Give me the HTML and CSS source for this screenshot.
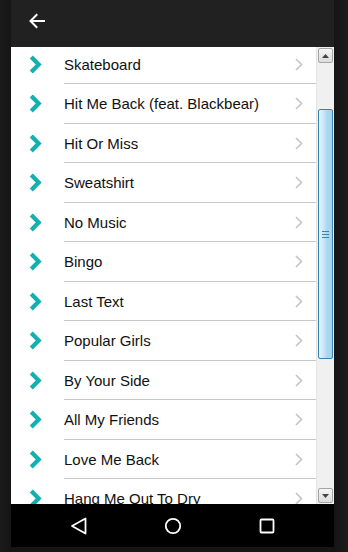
FILE: index.html
```html
<!DOCTYPE html>
<html>
<head>
<meta charset="utf-8">
<link rel="stylesheet" href="styles.css">
</head>
<body>
<div class="device">
  <div class="screen">
    <header class="topbar">
      <svg class="back" width="18" height="16" viewBox="0 0 18 16"><path d="M16 8H3M8.5 2L2.5 8l6 6" fill="none" stroke="#fff" stroke-width="2" stroke-linecap="square"/></svg>
    </header>
    <div class="content">
      <div class="list-wrap">
        <ul class="list">
          <li class="row"><svg class="lead" viewBox="0 0 14 18"><path d="M3 2l7 7-7 7" fill="none" stroke="#12b0b0" stroke-width="4"/></svg><span class="title">Skateboard</span><svg class="trail" viewBox="0 0 8 13"><path d="M1 1l5.5 5.5L1 12" fill="none" stroke="#c4c4c4" stroke-width="1.6"/></svg></li>
          <li class="row"><svg class="lead" viewBox="0 0 14 18"><path d="M3 2l7 7-7 7" fill="none" stroke="#12b0b0" stroke-width="4"/></svg><span class="title">Hit Me Back (feat. Blackbear)</span><svg class="trail" viewBox="0 0 8 13"><path d="M1 1l5.5 5.5L1 12" fill="none" stroke="#c4c4c4" stroke-width="1.6"/></svg></li>
          <li class="row"><svg class="lead" viewBox="0 0 14 18"><path d="M3 2l7 7-7 7" fill="none" stroke="#12b0b0" stroke-width="4"/></svg><span class="title">Hit Or Miss</span><svg class="trail" viewBox="0 0 8 13"><path d="M1 1l5.5 5.5L1 12" fill="none" stroke="#c4c4c4" stroke-width="1.6"/></svg></li>
          <li class="row"><svg class="lead" viewBox="0 0 14 18"><path d="M3 2l7 7-7 7" fill="none" stroke="#12b0b0" stroke-width="4"/></svg><span class="title">Sweatshirt</span><svg class="trail" viewBox="0 0 8 13"><path d="M1 1l5.5 5.5L1 12" fill="none" stroke="#c4c4c4" stroke-width="1.6"/></svg></li>
          <li class="row"><svg class="lead" viewBox="0 0 14 18"><path d="M3 2l7 7-7 7" fill="none" stroke="#12b0b0" stroke-width="4"/></svg><span class="title">No Music</span><svg class="trail" viewBox="0 0 8 13"><path d="M1 1l5.5 5.5L1 12" fill="none" stroke="#c4c4c4" stroke-width="1.6"/></svg></li>
          <li class="row"><svg class="lead" viewBox="0 0 14 18"><path d="M3 2l7 7-7 7" fill="none" stroke="#12b0b0" stroke-width="4"/></svg><span class="title">Bingo</span><svg class="trail" viewBox="0 0 8 13"><path d="M1 1l5.5 5.5L1 12" fill="none" stroke="#c4c4c4" stroke-width="1.6"/></svg></li>
          <li class="row"><svg class="lead" viewBox="0 0 14 18"><path d="M3 2l7 7-7 7" fill="none" stroke="#12b0b0" stroke-width="4"/></svg><span class="title">Last Text</span><svg class="trail" viewBox="0 0 8 13"><path d="M1 1l5.5 5.5L1 12" fill="none" stroke="#c4c4c4" stroke-width="1.6"/></svg></li>
          <li class="row"><svg class="lead" viewBox="0 0 14 18"><path d="M3 2l7 7-7 7" fill="none" stroke="#12b0b0" stroke-width="4"/></svg><span class="title">Popular Girls</span><svg class="trail" viewBox="0 0 8 13"><path d="M1 1l5.5 5.5L1 12" fill="none" stroke="#c4c4c4" stroke-width="1.6"/></svg></li>
          <li class="row"><svg class="lead" viewBox="0 0 14 18"><path d="M3 2l7 7-7 7" fill="none" stroke="#12b0b0" stroke-width="4"/></svg><span class="title">By Your Side</span><svg class="trail" viewBox="0 0 8 13"><path d="M1 1l5.5 5.5L1 12" fill="none" stroke="#c4c4c4" stroke-width="1.6"/></svg></li>
          <li class="row"><svg class="lead" viewBox="0 0 14 18"><path d="M3 2l7 7-7 7" fill="none" stroke="#12b0b0" stroke-width="4"/></svg><span class="title">All My Friends</span><svg class="trail" viewBox="0 0 8 13"><path d="M1 1l5.5 5.5L1 12" fill="none" stroke="#c4c4c4" stroke-width="1.6"/></svg></li>
          <li class="row"><svg class="lead" viewBox="0 0 14 18"><path d="M3 2l7 7-7 7" fill="none" stroke="#12b0b0" stroke-width="4"/></svg><span class="title">Love Me Back</span><svg class="trail" viewBox="0 0 8 13"><path d="M1 1l5.5 5.5L1 12" fill="none" stroke="#c4c4c4" stroke-width="1.6"/></svg></li>
          <li class="row"><svg class="lead" viewBox="0 0 14 18"><path d="M3 2l7 7-7 7" fill="none" stroke="#12b0b0" stroke-width="4"/></svg><span class="title">Hang Me Out To Dry</span><svg class="trail" viewBox="0 0 8 13"><path d="M1 1l5.5 5.5L1 12" fill="none" stroke="#c4c4c4" stroke-width="1.6"/></svg></li>
        </ul>
      </div>
      <div class="scrollbar">
        <div class="sb-btn"><svg width="7" height="4" viewBox="0 0 7 4"><path d="M0 4L3.5 0 7 4z" fill="#444"/></svg></div>
        <div class="sb-track">
          <div class="sb-thumb"><span class="grip"></span></div>
        </div>
        <div class="sb-btn"><svg width="7" height="4" viewBox="0 0 7 4"><path d="M0 0L3.5 4 7 0z" fill="#444"/></svg></div>
      </div>
    </div>
    <nav class="navbar">
      <svg width="18" height="18" viewBox="0 0 18 18"><path d="M15.5 1.5v15L2 9z" fill="none" stroke="#fff" stroke-width="1.8" stroke-linejoin="round"/></svg>
      <svg width="18" height="18" viewBox="0 0 18 18"><circle cx="9" cy="9" r="7.2" fill="none" stroke="#fff" stroke-width="1.8"/></svg>
      <svg width="18" height="18" viewBox="0 0 18 18"><rect x="2.5" y="2.5" width="13" height="13" rx="1" fill="none" stroke="#fff" stroke-width="1.8"/></svg>
    </nav>
  </div>
</div>
</body>
</html>
```

FILE: styles.css
```css
* { box-sizing: border-box; }
html, body { margin: 0; padding: 0; }
body {
  background: #171717;
  font-family: "Liberation Sans", Arial, sans-serif;
  width: 348px;
  height: 552px;
  overflow: hidden;
}
.device {
  height: 552px;
  padding: 0 14px 5px 11px;
  background: linear-gradient(90deg, #1b1b1b 0, #151515 11px, #151515 334px, #1c1c1c 348px);
}
.screen {
  height: 547px;
  display: flex;
  flex-direction: column;
}
.topbar {
  height: 47px;
  flex: none;
  background: #212121;
  display: flex;
  align-items: center;
  padding-left: 17px;
  padding-bottom: 5px;
}
.content {
  height: 457px;
  flex: none;
  display: flex;
  background: #fff;
}
.list-wrap {
  flex: 1;
  overflow: hidden;
}
.list {
  list-style: none;
  margin: -2.5px 0 0;
  padding: 0;
}
.row {
  height: 39.5px;
  display: flex;
  align-items: center;
  position: relative;
}
.row::after {
  content: "";
  position: absolute;
  left: 53px;
  right: 0;
  bottom: 0;
  height: 1px;
  background: #c8c8c8;
}
.lead {
  width: 15px;
  height: 19px;
  margin-left: 17px;
  flex: none;
}
.title {
  margin-left: 21px;
  flex: 1;
  font-size: 15px;
  color: #111;
  white-space: nowrap;
}
.trail {
  width: 8px;
  height: 13px;
  margin-right: 13px;
  flex: none;
}
.scrollbar {
  width: 18px;
  flex: none;
  display: flex;
  flex-direction: column;
  background: #f0f0f0;
  border-left: 1px solid #e4e4e4;
  padding: 1px;
}
.sb-btn {
  height: 15px;
  flex: none;
  border: 1px solid #a5a5a5;
  border-radius: 2px;
  background: linear-gradient(#f5f5f5, #dcdcdc);
  display: flex;
  align-items: center;
  justify-content: center;
}
.sb-track {
  flex: 1;
  padding-top: 46px;
  padding-bottom: 129px;
  display: flex;
}
.sb-thumb {
  flex: 1;
  border: 1px solid #3c7fb1;
  border-radius: 2px;
  background: linear-gradient(90deg, #e3f4fc 0, #c4e5f6 40%, #a9d9f2 60%, #a3d3ee 100%);
  display: flex;
  align-items: center;
  justify-content: center;
}
.grip {
  width: 7px;
  height: 7px;
  border-top: 1px solid #4a7fa5;
  border-bottom: 1px solid #4a7fa5;
  position: relative;
}
.grip::after {
  content: "";
  position: absolute;
  left: 0;
  right: 0;
  top: 2px;
  height: 1px;
  background: #4a7fa5;
}
.navbar {
  height: 43px;
  flex: none;
  background: #000;
  display: flex;
  align-items: center;
  justify-content: center;
  gap: 76px;
}
```
